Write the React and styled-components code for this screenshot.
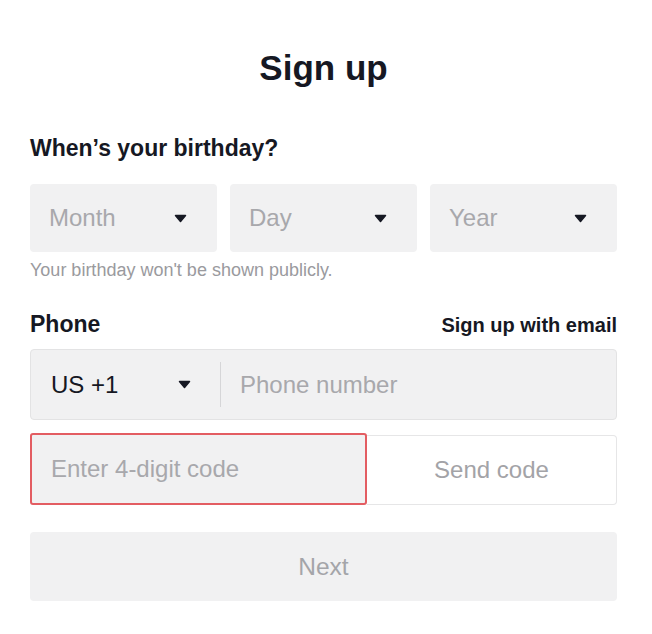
import React from "react";
import styled, { createGlobalStyle } from "styled-components";

const GlobalStyle = createGlobalStyle`
  body {
    margin: 0;
    background: #ffffff;
    font-family: "Liberation Sans", Arial, sans-serif;
    color: #161823;
  }
`;

const Page = styled.div`
  width: 587px;
  margin-left: 30px;
  padding-top: 47px;
  display: flex;
  flex-direction: column;
`;

const Title = styled.h1`
  margin: 0;
  font-size: 35px;
  line-height: 42px;
  font-weight: 700;
  text-align: center;
`;

const Label = styled.div`
  font-size: 23px;
  line-height: 26px;
  font-weight: 700;
  margin-top: ${(p) => p.$top || 0}px;
`;

const LabelRow = styled.div`
  display: flex;
  justify-content: space-between;
  align-items: baseline;
  margin-top: 31px;
`;

const EmailLink = styled.a`
  font-size: 20px;
  font-weight: 700;
  color: #161823;
  text-decoration: none;
  cursor: pointer;
`;

const DateRow = styled.div`
  display: grid;
  grid-template-columns: repeat(3, 1fr);
  gap: 13px;
  margin-top: 23px;
`;

const Select = styled.div`
  height: 68px;
  background: #f1f1f2;
  border-radius: 4px;
  display: flex;
  align-items: center;
  justify-content: space-between;
  padding: 0 30px 0 19px;
  font-size: 24px;
  color: #a8a8ac;
`;

const Helper = styled.div`
  font-size: 18px;
  line-height: 20px;
  color: #9a9a9e;
  margin-top: 8px;
`;

const PhoneBox = styled.div`
  margin-top: 12px;
  height: 71px;
  box-sizing: border-box;
  background: #f1f1f2;
  border: 1px solid #e3e3e4;
  border-radius: 4px;
  display: flex;
  align-items: center;
`;

const Country = styled.div`
  box-sizing: border-box;
  width: 189px;
  padding: 0 29px 0 20px;
  display: flex;
  align-items: center;
  justify-content: space-between;
  font-size: 24px;
  color: #161823;
`;

const Divider = styled.div`
  width: 1px;
  height: 45px;
  background: #d6d6d8;
`;

const Placeholder = styled.span`
  font-size: 24px;
  color: #a8a8ac;
  padding-left: ${(p) => p.$pad || 0}px;
`;

const CodeRow = styled.div`
  margin-top: 13px;
  display: grid;
  grid-template-columns: 337px 1fr;
  height: 72px;
`;

const CodeInput = styled.div`
  box-sizing: border-box;
  background: #f1f1f2;
  border: 2px solid #e35d62;
  border-radius: 3px;
  display: flex;
  align-items: center;
  padding-left: 19px;
`;

const SendButton = styled.div`
  box-sizing: border-box;
  margin-top: 2px;
  background: #ffffff;
  border: 1px solid #e6e6e7;
  border-left: none;
  border-radius: 0 4px 4px 0;
  display: flex;
  align-items: center;
  justify-content: center;
  font-size: 24px;
  color: #a3a3a7;
`;

const NextButton = styled.div`
  margin-top: 27px;
  height: 69px;
  background: #f1f1f2;
  border-radius: 4px;
  display: flex;
  align-items: center;
  justify-content: center;
  font-size: 24.5px;
  font-weight: 400;
  color: #a4a5a9;
`;

const Caret = () => (
  <svg width="13" height="9" viewBox="0 0 13 9">
    <path
      d="M1.5 1.5 H11.5 L6.5 7.5 Z"
      fill="#161823"
      stroke="#161823"
      strokeWidth="1.5"
      strokeLinejoin="round"
    />
  </svg>
);

const App = () => {
  return (
    <>
      <GlobalStyle />
      <Page>
        <Title>Sign up</Title>
        <Label $top={46}>When’s your birthday?</Label>
        <DateRow>
          {["Month", "Day", "Year"].map((d) => (
            <Select key={d}>
              <span>{d}</span>
              <Caret />
            </Select>
          ))}
        </DateRow>
        <Helper>Your birthday won't be shown publicly.</Helper>
        <LabelRow>
          <Label>Phone</Label>
          <EmailLink>Sign up with email</EmailLink>
        </LabelRow>
        <PhoneBox>
          <Country>
            <span>US +1</span>
            <Caret />
          </Country>
          <Divider />
          <Placeholder $pad={19}>Phone number</Placeholder>
        </PhoneBox>
        <CodeRow>
          <CodeInput>
            <Placeholder>Enter 4-digit code</Placeholder>
          </CodeInput>
          <SendButton>Send code</SendButton>
        </CodeRow>
        <NextButton>Next</NextButton>
      </Page>
    </>
  );
};

export default App;
